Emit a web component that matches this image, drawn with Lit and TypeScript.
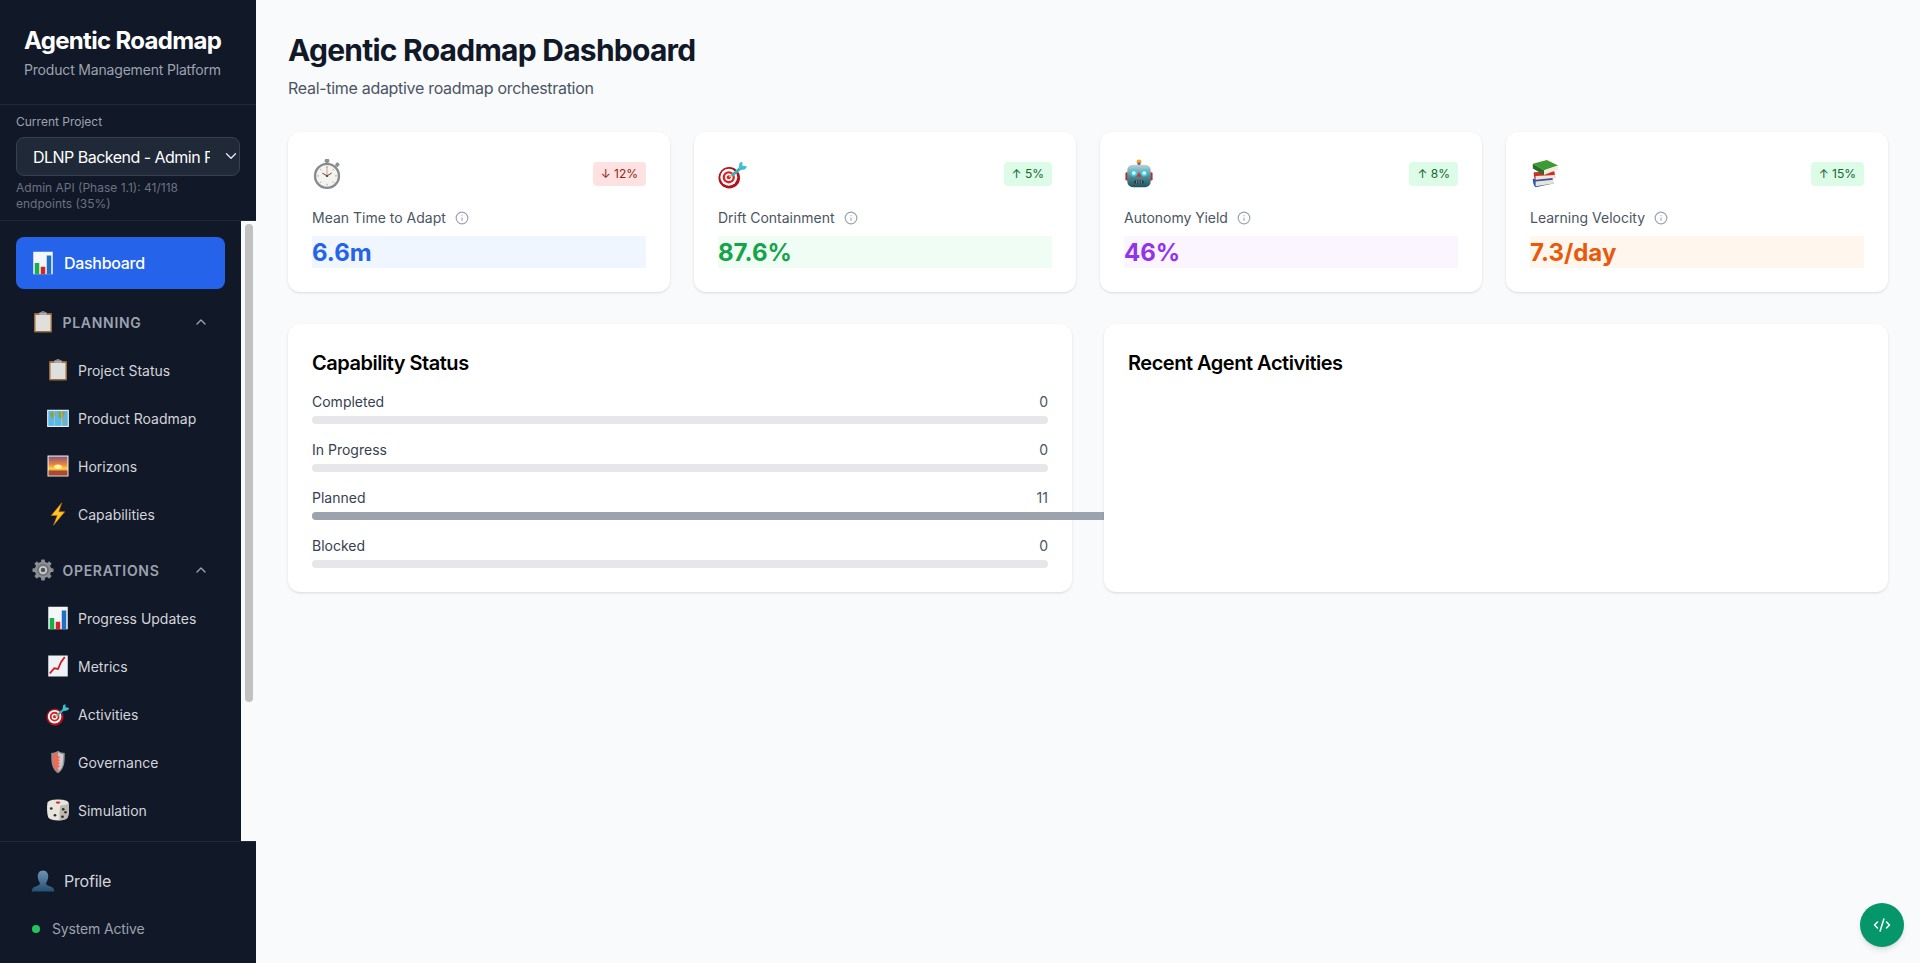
import { LitElement, html, css, svg } from 'lit';
import { customElement } from 'lit/decorators.js';

// emoji drawn by hand, all on a 32x32 box
const EMOJI: Record<string, unknown> = {
  chart: svg`<rect x="3" y="1" width="26" height="30" fill="#f4f6f8"/>
    <rect x="5" y="16" width="6" height="15" fill="#16b04a"/><rect x="13" y="21" width="6" height="10" fill="#d8232a"/>
    <rect x="21" y="6" width="6" height="25" fill="#1f6fc4"/>`,
  clipboard: svg`<rect x="4" y="4" width="24" height="26" rx="1.500" fill="#9a6a38"/><rect x="6" y="6.500" width="20" height="21.500" fill="#dfdfdd"/>
    <rect x="11" y="3" width="10" height="3.500" rx="1" fill="#a8a8a8"/><rect x="14" y="1.500" width="4" height="2" fill="#8a8a8a"/>`,
  map: svg`<rect x="1.500" y="5" width="29" height="23" fill="#eef2f5"/><rect x="3" y="6.500" width="26" height="20" fill="#5bb7e8"/>
    <path d="M6 9l6-1 1 4-3 2 1 5-3-3-2-4zM15 8l8-1 3 3-3 3-2 6-2-3-3-2 2-3z" fill="#8f9f45"/><path d="M22 18l4 1-1 4-3-1z" fill="#c2a24a"/>
    <path d="M11 6v21M21 6v21" stroke="#fff" stroke-opacity=".45"/>`,
  sunset: svg`<defs><linearGradient id="sk" x1="0" y1="0" x2="0" y2="1"><stop offset="0" stop-color="#8a5578"/><stop offset=".45" stop-color="#f08a3c"/><stop offset=".62" stop-color="#ffd24a"/><stop offset="1" stop-color="#c9563a"/></linearGradient></defs>
    <rect x="2" y="2" width="28" height="28" fill="#e8e8e8"/><rect x="3.500" y="3.500" width="25" height="25" fill="url(#sk)"/>
    <ellipse cx="16" cy="17" rx="5" ry="3" fill="#fff3a0"/><path d="M3.500 22h25v6.500h-25z" fill="#a84a34"/>`,
  bolt: svg`<path d="M21 1L7 18h8l-5 13 15-18h-8z" fill="#ffc425" stroke="#c9720c" stroke-width=".8"/>`,
  gear: svg`<g fill="#8c8f94"><circle cx="16" cy="16" r="11"/><rect x="13.500" y="2" width="5" height="28" rx="1"/><rect x="13.500" y="2" width="5" height="28" rx="1" transform="rotate(45 16 16)"/><rect x="13.500" y="2" width="5" height="28" rx="1" transform="rotate(90 16 16)"/><rect x="13.500" y="2" width="5" height="28" rx="1" transform="rotate(135 16 16)"/></g>
    <circle cx="16" cy="16" r="8" fill="#6f7277"/><circle cx="16" cy="16" r="5.500" fill="#c9cbcf"/><circle cx="16" cy="16" r="3" fill="#4d5055"/>`,
  line: svg`<rect x="3" y="2" width="26" height="28" fill="#eef2f5"/><path d="M5 26l6-7 5 1 4-9 5-7" fill="none" stroke="#d01c24" stroke-width="2.400"/>`,
  target: svg`<circle cx="12" cy="20" r="11.500" fill="#b3121b"/><circle cx="11.500" cy="19.500" r="9" fill="#fff"/><circle cx="11.500" cy="19.500" r="6.500" fill="#d8232a"/><circle cx="11.500" cy="19.500" r="4" fill="#fff"/><circle cx="11.500" cy="19.500" r="2.200" fill="#d8232a"/>
    <path d="M12 19l3-2" stroke="#e8b93a" stroke-width="2"/><path d="M15 17.500L25 9" stroke="#35b0c4" stroke-width="3"/><path d="M22 10l1-6 3-1 0 4 5 1-2 3-5 1z" fill="#3fc0d2"/>`,
  shield: svg`<path d="M16 1c3 2 6 3 9 3 0 12 0 21-9 27C7 25 7 16 7 4c3 0 6-1 9-3z" fill="#8d9196"/><path d="M16 3c2.500 1.500 5 2.500 7 2.800 0 10 0 18-7 23z" fill="#c8ccd0"/>
    <path d="M16 3c-2.500 1.500-5 2.500-7 2.800 0 10 0 18 7 23 2-2 0-3 0-5l3-2-3-2 3-2-3-2 3-2-3-2 3-2-3-2z" fill="#ee6a55"/>`,
  dice: svg`<path d="M16 2c7 0 12 1 14 4 1 6 1 14-1 20-3 3-8 4-13 4-6 0-10-1-13-4C1 20 1 12 2 6c2-3 7-4 14-4z" fill="#e8e4de"/><path d="M30 8c1 6 1 12-1 18-3 3-6 4-11 4 0-8 0-14 1-20 4 0 8-1 11-2z" fill="#bdb8b0"/>
    <ellipse cx="16" cy="6" rx="3" ry="1.500" fill="#d8232a"/><g fill="#2a2a2a"><circle cx="7" cy="14" r="1.800"/><circle cx="12" cy="23" r="1.800"/><circle cx="23" cy="15" r="1.800"/><circle cx="26" cy="19" r="1.600"/><circle cx="22" cy="25" r="1.800"/></g>`,
  person: svg`<defs><linearGradient id="pg" x1="0" y1="0" x2="0" y2="1"><stop offset="0" stop-color="#6d93b5"/><stop offset="1" stop-color="#26506f"/></linearGradient></defs>
    <path d="M16 2c5 0 7 4 7 8 0 4-2 7-3 9 0 2 2 3 5 4 4 1 6 3 6 7H1c0-4 2-6 6-7 3-1 5-2 5-4-1-2-3-5-3-9 0-4 2-8 7-8z" fill="url(#pg)"/>`,
  watch: svg`<rect x="13.500" y="0" width="5" height="4" rx="1.500" fill="#8c8f94"/><rect x="15" y="3" width="2" height="3" fill="#8c8f94"/><rect x="25" y="4" width="4" height="4" rx="1" fill="#8c8f94" transform="rotate(40 27 6)"/>
    <circle cx="16" cy="18" r="14" fill="#868b91"/><circle cx="16" cy="18" r="11.500" fill="#f5f3ee"/>
    <path d="M16 18V8" stroke="#e8836b" stroke-width=".9"/><path d="M16 18l5-3M16 18l-5-3" stroke="#444" stroke-width="1"/><circle cx="16" cy="18" r="1.300" fill="#555"/>
    <g stroke="#a5a5a5" stroke-width="1"><path d="M16 7.500v2M16 26.500v2M5.500 18h2M24.500 18h2M8.500 10.500l1.400 1.400M22 24l1.500 1.500M8.500 25.500l1.400-1.400M22 12l1.500-1.500"/></g>`,
  robot: svg`<defs><linearGradient id="rg" x1="0" y1="0" x2="0" y2="1"><stop offset="0" stop-color="#b7d6dc"/><stop offset=".55" stop-color="#4f8994"/><stop offset="1" stop-color="#1f5560"/></linearGradient></defs>
    <circle cx="16" cy="3" r="2.600" fill="#f4a12a"/><rect x="14.500" y="4" width="3" height="3" fill="#6d4aa0"/>
    <rect x="1.500" y="14" width="3.500" height="9" rx="1.500" fill="#b3302c"/><rect x="27" y="14" width="3.500" height="9" rx="1.500" fill="#b3302c"/>
    <rect x="3.500" y="6" width="25" height="24" rx="6" fill="url(#rg)"/>
    <circle cx="10.500" cy="15" r="3.600" fill="#2fd0f0"/><circle cx="21.500" cy="15" r="3.600" fill="#2fd0f0"/><circle cx="10.500" cy="15" r="1.900" fill="#fff"/><circle cx="21.500" cy="15" r="1.900" fill="#fff"/>
    <path d="M16 14l3 5h-6z" fill="#d8352c"/><rect x="11" y="23" width="10" height="3" rx="1" fill="#27383e"/><path d="M13.500 23v3M16 23v3M18.500 23v3" stroke="#9fb4b8" stroke-width=".8"/>`,
  books: svg`<path d="M3 21l21-1 1 6-19 4c-2-1-3-5-3-9z" fill="#2f56a8"/><path d="M6 24l19-2v4l-19 3z" fill="#e8e4da"/>
    <path d="M4 14l22-1 1 7-21 2c-2-2-2-5-2-8z" fill="#c8302a"/><path d="M6 18l21-1v3L6 22z" fill="#efe8d8"/>
    <path d="M3 5L18 1l12 6-15 5z" fill="#3f9a35"/><path d="M3 5l12 7v5L3 10z" fill="#256e24"/><path d="M15 12l15-5v4l-15 6z" fill="#f2ecdc"/>`,
};

const emoji = (name: string) =>
  html`<svg class="emoji" viewBox="0 0 32 32">${EMOJI[name]}</svg>`;

const chevronUp = html`<svg class="chev" viewBox="0 0 24 24" fill="none" stroke="currentColor" stroke-width="2" stroke-linecap="round" stroke-linejoin="round"><path d="M18 15l-6-6-6 6"/></svg>`;

const infoIcon = html`<svg class="info" viewBox="0 0 24 24" fill="none" stroke="currentColor" stroke-width="2" stroke-linecap="round" stroke-linejoin="round"><circle cx="12" cy="12" r="10"/><path d="M12 16v-4"/><path d="M12 8h.01"/></svg>`;

const groups = [
  {
    title: 'Planning',
    icon: 'clipboard',
    items: [
      ['clipboard', 'Project Status'],
      ['map', 'Product Roadmap'],
      ['sunset', 'Horizons'],
      ['bolt', 'Capabilities'],
    ],
  },
  {
    title: 'Operations',
    icon: 'gear',
    items: [
      ['chart', 'Progress Updates'],
      ['line', 'Metrics'],
      ['target', 'Activities'],
      ['shield', 'Governance'],
      ['dice', 'Simulation'],
    ],
  },
];

const metrics = [
  { icon: 'watch', label: 'Mean Time to Adapt', value: '6.6m', trend: '↓ 12%', down: true, tone: 'blue' },
  { icon: 'target', label: 'Drift Containment', value: '87.6%', trend: '↑ 5%', down: false, tone: 'green' },
  { icon: 'robot', label: 'Autonomy Yield', value: '46%', trend: '↑ 8%', down: false, tone: 'purple' },
  { icon: 'books', label: 'Learning Velocity', value: '7.3/day', trend: '↑ 15%', down: false, tone: 'orange' },
];

const statuses = [
  { label: 'Completed', count: 0 },
  { label: 'In Progress', count: 0 },
  { label: 'Planned', count: 11 },
  { label: 'Blocked', count: 0 },
];

@customElement('app-root')
export class AppRoot extends LitElement {
  static styles = css`
    :host {
      display: flex;
      height: 100vh;
      overflow: hidden;
      background: #f9fafb;
      font-family: Inter, 'Liberation Sans', sans-serif;
      color: #111827;
    }

    .emoji {
      display: block;
      flex: none;
      width: 24px;
      height: 24px;
    }

    /* sidebar */
    .sidebar {
      flex: none;
      width: 256px;
      display: flex;
      flex-direction: column;
      background: #111827;
      color: #fff;
    }

    .brand {
      padding: 25px 24px 24px;
      border-bottom: 1px solid #1f2937;
    }

    .brand h1 {
      margin: 0;
      font-size: 24px;
      line-height: 32px;
      font-weight: 700;
      letter-spacing: -0.67px;
    }

    .brand p {
      margin: 3px 0 0;
      font-size: 14px;
      line-height: 20px;
      letter-spacing: -0.18px;
      color: #9ca3af;
    }

    .project {
      padding: 9px 16px 8px;
      border-bottom: 1px solid #1f2937;
    }

    .project label {
      display: block;
      margin-bottom: 7px;
      font-size: 12px;
      line-height: 16px;
      color: #9ca3af;
    }

    .picker {
      position: relative;
    }

    .picker select {
      display: block;
      width: 100%;
      height: 39px;
      padding: 0 29px 0 16px;
      appearance: none;
      background: #1f2937;
      border: 1px solid #374151;
      border-radius: 8px;
      color: #fff;
      font-family: inherit;
      font-size: 16px;
      letter-spacing: -0.52px;
    }

    .picker svg {
      position: absolute;
      right: 0;
      top: 10px;
      width: 18px;
      height: 18px;
      color: #e5e7eb;
      pointer-events: none;
    }

    .project p {
      max-width: 200px;
      margin: 4px 0 0;
      font-size: 12px;
      line-height: 16px;
      color: #6b7280;
    }

    .nav-wrap {
      flex: 1;
      min-height: 0;
      display: flex;
    }

    .nav {
      flex: 1;
      min-width: 0;
      padding: 16px;
      overflow: hidden;
    }

    .scrollbar {
      flex: none;
      width: 15px;
      background: #fafafa;
    }

    .thumb {
      width: 8px;
      height: 478px;
      margin: 3px 3px 0 4px;
      background: #c1c1c1;
      border-radius: 4px;
    }

    .dash {
      display: flex;
      align-items: center;
      gap: 9px;
      height: 52px;
      padding-left: 15px;
      background: #2563eb;
      border-radius: 8px;
      font-size: 16px;
      font-weight: 500;
      letter-spacing: -0.3px;
    }

    .group {
      margin-top: 9px;
    }

    .group + .group {
      margin-top: 8px;
    }

    .group-head {
      display: flex;
      align-items: center;
      gap: 7.5px;
      height: 48px;
      padding: 0 16px 0 15px;
      font-size: 14px;
      font-weight: 600;
      letter-spacing: 0.7px;
      text-transform: uppercase;
      color: #9ca3af;
    }

    .group-head .title {
      flex: 1;
    }

    .chev {
      width: 16px;
      height: 16px;
      flex: none;
    }

    .item {
      display: flex;
      align-items: center;
      gap: 8px;
      height: 48px;
      padding-left: 30px;
      font-size: 14px;
      color: #d1d5db;
    }

    .foot {
      flex: none;
      padding: 17px 16px 24px;
      border-top: 1px solid #1f2937;
    }

    .profile {
      display: flex;
      align-items: center;
      gap: 9px;
      height: 44px;
      padding-left: 15px;
      font-size: 16px;
      letter-spacing: -0.2px;
      color: #d1d5db;
    }

    .status {
      display: flex;
      align-items: center;
      gap: 12px;
      margin-top: 16px;
      padding-left: 16px;
      font-size: 14px;
      line-height: 20px;
      letter-spacing: -0.15px;
      color: #9ca3af;
    }

    .dot {
      width: 8px;
      height: 8px;
      border-radius: 50%;
      background: #22c55e;
    }

    /* main */
    .main {
      flex: 1;
      min-width: 0;
      padding: 32px;
    }

    .main > h2 {
      margin: 0;
      font-size: 30px;
      line-height: 36px;
      font-weight: 700;
      letter-spacing: -0.75px;
    }

    .sub {
      margin: 8px 0 0;
      font-size: 16px;
      line-height: 24px;
      letter-spacing: -0.3px;
      color: #4b5563;
    }

    .cards {
      display: grid;
      grid-template-columns: repeat(4, 1fr);
      gap: 24px;
      margin-top: 32px;
    }

    .card,
    .panel {
      background: #fff;
      border-radius: 12px;
      box-shadow: 0 1px 3px rgba(0, 0, 0, 0.1), 0 1px 2px -1px rgba(0, 0, 0, 0.1);
    }

    .card {
      padding: 24px;
    }

    .card-top {
      display: flex;
      align-items: center;
      justify-content: space-between;
      height: 36px;
      margin-bottom: 16px;
    }

    .card-top .emoji {
      width: 30px;
      height: 30px;
    }

    .trend {
      padding: 0 8px;
      border-radius: 4px;
      font-size: 12px;
      line-height: 24px;
      background: #dcfce7;
      color: #166534;
    }

    .trend.down {
      background: #fee2e2;
      color: #991b1b;
    }

    .label {
      display: flex;
      align-items: center;
      gap: 9px;
      font-size: 14px;
      line-height: 20px;
      color: #4b5563;
    }

    .info {
      width: 14px;
      height: 14px;
      color: #9ca3af;
    }

    .value {
      height: 32px;
      margin-top: 8px;
      font-size: 24px;
      line-height: 34px;
      font-weight: 700;
    }

    .value.blue {
      background: #eff6ff;
      color: #2563eb;
    }

    .value.green {
      background: #f0fdf4;
      color: #16a34a;
    }

    .value.purple {
      background: #faf5ff;
      color: #9333ea;
    }

    .value.orange {
      background: #fff7ed;
      color: #ea580c;
    }

    .panels {
      display: grid;
      grid-template-columns: repeat(2, 1fr);
      gap: 32px;
      margin-top: 32px;
    }

    .panel {
      padding: 24px;
    }

    .panel h3 {
      margin: 1px 0 15px;
      font-size: 20px;
      line-height: 28px;
      font-weight: 600;
      letter-spacing: -0.48px;
      color: #000;
    }

    .rows {
      display: grid;
      gap: 16px;
    }

    .row-head {
      display: flex;
      justify-content: space-between;
      margin-bottom: 4px;
      font-size: 14px;
      line-height: 20px;
      color: #374151;
    }

    .row-head .count {
      color: #4b5563;
    }

    .track {
      height: 8px;
      background: #e5e7eb;
      border-radius: 9999px;
    }

    .fill {
      height: 8px;
      background: #9ca3af;
      border-radius: 9999px;
    }

    .fab {
      position: fixed;
      right: 16px;
      bottom: 16px;
      width: 44px;
      height: 44px;
      display: flex;
      align-items: center;
      justify-content: center;
      border-radius: 50%;
      background: #059669;
      color: #fff;
      box-shadow: 0 4px 6px -1px rgba(0, 0, 0, 0.1), 0 2px 4px -2px rgba(0, 0, 0, 0.1);
    }

    .fab svg {
      width: 18px;
      height: 18px;
    }
  `;

  private renderGroup(group: (typeof groups)[number]) {
    return html`
      <div class="group">
        <div class="group-head">
          ${emoji(group.icon)}
          <span class="title">${group.title}</span>
          ${chevronUp}
        </div>
        ${group.items.map(([icon, label]) => html`<div class="item">${emoji(icon)}<span>${label}</span></div>`)}
      </div>
    `;
  }

  private renderCard(m: (typeof metrics)[number]) {
    return html`
      <div class="card">
        <div class="card-top">
          ${emoji(m.icon)}
          <span class="trend ${m.down ? 'down' : ''}">${m.trend}</span>
        </div>
        <div class="label">${m.label} ${infoIcon}</div>
        <div class="value ${m.tone}">${m.value}</div>
      </div>
    `;
  }

  render() {
    const max = 10;
    return html`
      <aside class="sidebar">
        <div class="brand">
          <h1>Agentic Roadmap</h1>
          <p>Product Management Platform</p>
        </div>
        <div class="project">
          <label>Current Project</label>
          <div class="picker">
            <select>
              <option>DLNP Backend - Admin Panel</option>
            </select>
            <svg viewBox="0 0 24 24" fill="none" stroke="currentColor" stroke-width="1.8" stroke-linecap="round" stroke-linejoin="round"><path d="M6 9l6 6 6-6"/></svg>
          </div>
          <p>Admin API (Phase 1.1): 41/118 endpoints (35%)</p>
        </div>
        <div class="nav-wrap">
          <nav class="nav">
            <div class="dash">${emoji('chart')}<span>Dashboard</span></div>
            ${groups.map((g) => this.renderGroup(g))}
          </nav>
          <div class="scrollbar"><div class="thumb"></div></div>
        </div>
        <div class="foot">
          <div class="profile">${emoji('person')}<span>Profile</span></div>
          <div class="status"><span class="dot"></span>System Active</div>
        </div>
      </aside>
      <main class="main">
        <h2>Agentic Roadmap Dashboard</h2>
        <p class="sub">Real-time adaptive roadmap orchestration</p>
        <div class="cards">${metrics.map((m) => this.renderCard(m))}</div>
        <div class="panels">
          <section class="panel">
            <h3>Capability Status</h3>
            <div class="rows">
              ${statuses.map(
                (s) => html`
                  <div>
                    <div class="row-head"><span>${s.label}</span><span class="count">${s.count}</span></div>
                    <div class="track"><div class="fill" style="width: ${(s.count / max) * 100}%"></div></div>
                  </div>
                `
              )}
            </div>
          </section>
          <section class="panel">
            <h3>Recent Agent Activities</h3>
          </section>
        </div>
      </main>
      <div class="fab">
        <svg viewBox="0 0 24 24" fill="none" stroke="currentColor" stroke-width="2" stroke-linecap="round" stroke-linejoin="round"><path d="M18 16l4-4-4-4"/><path d="M6 8l-4 4 4 4"/><path d="M14.500 4l-5 16"/></svg>
      </div>
    `;
  }
}

declare global {
  interface HTMLElementTagNameMap {
    'app-root': AppRoot;
  }
}
